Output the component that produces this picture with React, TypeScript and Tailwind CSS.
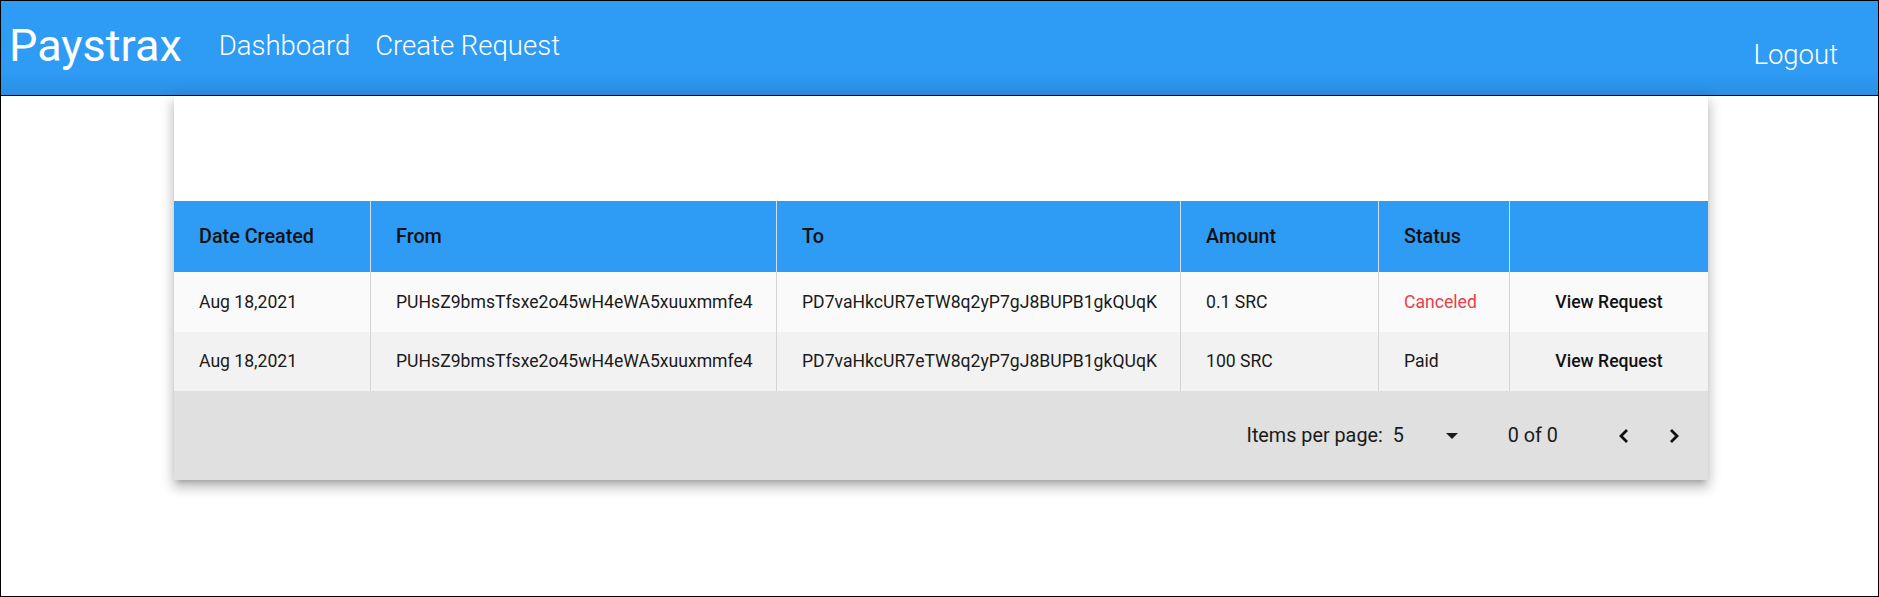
import React from 'react'

const cols = 'grid grid-cols-[197px_406px_404px_198px_131px_198px]'

const rows = [
  {
    date: 'Aug 18,2021',
    from: 'PUHsZ9bmsTfsxe2o45wH4eWA5xuuxmmfe4',
    to: 'PD7vaHkcUR7eTW8q2yP7gJ8BUPB1gkQUqK',
    amount: '0.1 SRC',
    status: 'Canceled'
  },
  {
    date: 'Aug 18,2021',
    from: 'PUHsZ9bmsTfsxe2o45wH4eWA5xuuxmmfe4',
    to: 'PD7vaHkcUR7eTW8q2yP7gJ8BUPB1gkQUqK',
    amount: '100 SRC',
    status: 'Paid'
  }
]

const App = () => {
  return (
    <div className="w-[1879px] h-[597px] border border-black bg-white overflow-hidden font-['Roboto',sans-serif] text-[#1a1a1a]">
      {/* top bar */}
      <div className="h-[95px] flex items-center pb-[5px] pl-[8px] pr-[40px] border-b border-black bg-gradient-to-b from-[#2e9bf5] via-[#2e9bf5] via-75% to-[#2a8fe3] text-white">
        <span className="text-[45px] leading-none font-normal">Paystrax</span>
        <span className="ml-[37px] text-[27.5px] leading-none font-light">Dashboard</span>
        <span className="ml-[25px] text-[27.5px] leading-none font-light">Create Request</span>
        <span className="ml-auto mt-[18px] text-[27.5px] leading-none font-light">Logout</span>
      </div>

      {/* card */}
      <div className="ml-[173px] w-[1534px] bg-white shadow-[0_5px_5px_-3px_rgba(0,0,0,0.2),0_8px_10px_1px_rgba(0,0,0,0.14),0_3px_14px_2px_rgba(0,0,0,0.12)]">
        <div className="h-[105px]" />

        <div className={`${cols} h-[71px] bg-[#2e9bf5] text-[19.8px] font-medium text-[#111]`}>
          {['Date Created', 'From', 'To', 'Amount', 'Status', ''].map((h, i) => (
            <div
              key={i}
              className={`flex items-center pl-[25px] ${i < 5 ? 'border-r border-[#cfdff0]' : ''}`}
            >
              {h}
            </div>
          ))}
        </div>

        {rows.map((r, i) => (
          <div
            key={i}
            className={`${cols} ${i === 0 ? 'h-[60px] bg-[#fafafa]' : 'h-[59px] bg-[#f2f2f2]'} text-[17.6px] text-[#1a1a1a]`}
          >
            <div className="flex items-center pl-[25px] border-r border-[#d4d4d4]">{r.date}</div>
            <div className="flex items-center pl-[25px] border-r border-[#d4d4d4]">{r.from}</div>
            <div className="flex items-center pl-[25px] border-r border-[#d4d4d4]">{r.to}</div>
            <div className="flex items-center pl-[25px] border-r border-[#d4d4d4]">{r.amount}</div>
            <div
              className={`flex items-center pl-[25px] border-r border-[#d4d4d4] ${
                r.status === 'Canceled' ? 'text-[#e8404a]' : ''
              }`}
            >
              {r.status}
            </div>
            <div className="flex items-center justify-center font-medium text-[#111]">View Request</div>
          </div>
        ))}

        {/* paginator */}
        <div className="h-[89px] bg-[#e0e0e0] flex items-center justify-end pr-[14px] text-[19.8px] text-[#1a1a1a]">
          <span>Items per page:</span>
          <div className="ml-[10px] w-[65px] flex items-center justify-between">
            <span>5</span>
            <svg width="12" height="6" viewBox="0 0 10 5" className="mt-[1px]">
              <path d="M0 0l5 5 5-5z" fill="#1a1a1a" />
            </svg>
          </div>
          <span className="ml-[50px]">0 of 0</span>
          <div className="ml-[46px] flex items-center">
            <button className="w-[40px] h-[40px] flex items-center justify-center">
              <svg width="14" height="16" viewBox="0 0 14 16">
                <path d="M10 2L4 8l6 6" fill="none" stroke="#111" strokeWidth="2.8" />
              </svg>
            </button>
            <button className="ml-[10px] w-[40px] h-[40px] flex items-center justify-center">
              <svg width="14" height="16" viewBox="0 0 14 16">
                <path d="M4 2l6 6-6 6" fill="none" stroke="#111" strokeWidth="2.8" />
              </svg>
            </button>
          </div>
        </div>
      </div>
    </div>
  )
}

export default App
